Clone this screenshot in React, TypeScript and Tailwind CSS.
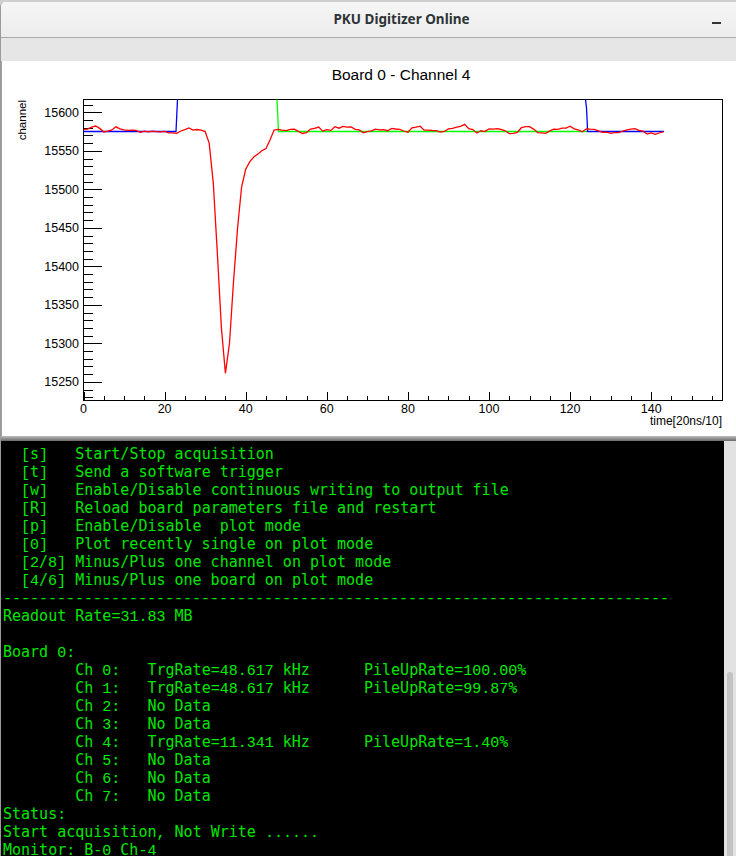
import React from 'react';

// plot coordinates (page pixels)
const X = (t: number) => 83.5 + t * 4.055;
const Y = (v: number) => 113.3 + (15600 - v) * 0.77;

const pulse: Record<number, number> = {
  30: 15575, 31: 15560, 32: 15508, 33: 15418, 34: 15320, 35: 15261, 36: 15300,
  37: 15380, 38: 15450, 39: 15503, 40: 15526, 41: 15536, 42: 15542, 43: 15546,
  44: 15550, 45: 15553, 46: 15564, 47: 15577,
};

function noise(i: number) {
  const s = Math.sin(i * 12.9898 + 4.1) * 43758.5453;
  return s - Math.floor(s);
}

const red = Array.from({ length: 144 }, (_, i) => {
  const n = (noise(i) + noise(i - 1) + noise(i + 1)) / 3 - 0.5;
  const v = pulse[i] ?? 15577 + n * 16 + Math.sin(i * 0.7) * 1.5;
  return `${X(i).toFixed(1)},${Y(v).toFixed(1)}`;
}).join(' ');

function Plot() {
  const yMajor = [15250, 15300, 15350, 15400, 15450, 15500, 15550, 15600];
  const yMinor: number[] = [];
  for (let v = 15230; v <= 15610; v += 10) yMinor.push(v);
  const xMajor = [0, 20, 40, 60, 80, 100, 120, 140];
  const xMinor: number[] = [];
  for (let t = 0; t <= 155; t += 5) xMinor.push(t);

  return (
    <svg width="734" height="375" viewBox="2 62 734 375" className="block">
      <text x="401" y="81" textAnchor="middle" fontSize="15.5" fontFamily="Liberation Sans, Arial, sans-serif" fill="#000">
        Board 0 - Channel 4
      </text>
      <text transform="translate(26,101) rotate(-90)" textAnchor="end" fontSize="11.5" fontFamily="Liberation Sans, Arial, sans-serif" fill="#000">
        channel
      </text>

      <g stroke="#000" strokeWidth="1" shapeRendering="crispEdges">
        <rect x="83.5" y="100.5" width="639" height="301" fill="none" />
        {yMinor.map((v) => (
          <line key={'ym' + v} x1="83.5" x2={yMajor.includes(v) ? 101.5 : 92.5} y1={Math.round(Y(v)) + 0.5} y2={Math.round(Y(v)) + 0.5} />
        ))}
        {xMinor.map((t) => (
          <line key={'xm' + t} x1={Math.round(X(t)) + 0.5} x2={Math.round(X(t)) + 0.5} y1="401.5" y2={t % 20 === 0 ? 392.5 : 396.5} />
        ))}
      </g>

      <g fontSize="12.5" fontFamily="Liberation Sans, Arial, sans-serif" fill="#000">
        {yMajor.map((v) => (
          <text key={'yl' + v} x="79" y={Y(v) + 4.5} textAnchor="end">{v}</text>
        ))}
        {xMajor.map((t) => (
          <text key={'xl' + t} x={X(t)} y="413.5" textAnchor="middle">{t}</text>
        ))}
        <text x="722" y="426" textAnchor="end" fontSize="12">time[20ns/10]</text>
      </g>

      <g fill="none" strokeWidth="1.3">
        <polyline points="277,100.5 278.5,132.5 587,132.5" stroke="#00ff00" />
        <polyline points="83.5,132.5 176,132.5 177.5,100.5" stroke="#0000ff" />
        <polyline points="585.5,100.5 586.5,109 587.3,125 587.5,132.5 664,132.5" stroke="#0000ff" />
        <polyline points={red} stroke="#ff0000" />
      </g>
    </svg>
  );
}

const lines = [
  '  [s]   Start/Stop acquisition',
  '  [t]   Send a software trigger',
  '  [w]   Enable/Disable continuous writing to output file',
  '  [R]   Reload board parameters file and restart',
  '  [p]   Enable/Disable  plot mode',
  '  [0]   Plot recently single on plot mode',
  '  [2/8] Minus/Plus one channel on plot mode',
  '  [4/6] Minus/Plus one board on plot mode',
  '-'.repeat(74),
  'Readout Rate=31.83 MB',
  '',
  'Board 0:',
  '        Ch 0:   TrgRate=48.617 kHz      PileUpRate=100.00%',
  '        Ch 1:   TrgRate=48.617 kHz      PileUpRate=99.87%',
  '        Ch 2:   No Data',
  '        Ch 3:   No Data',
  '        Ch 4:   TrgRate=11.341 kHz      PileUpRate=1.40%',
  '        Ch 5:   No Data',
  '        Ch 6:   No Data',
  '        Ch 7:   No Data',
  'Status:',
  'Start acquisition, Not Write ......',
  'Monitor: B-0 Ch-4',
];

// digits and punctuation come out thin in the original terminal
function TermLine({ text }: { text: string }) {
  const parts = text.split(/([0-9\[\]:.,=\-]+)/);
  return (
    <div className="h-[18px]">
      {parts.map((p, i) =>
        i % 2 === 1 ? (
          <span key={i} className="font-['Liberation_Mono',monospace] text-[#00ee00]">{p}</span>
        ) : (
          <span key={i}>{p}</span>
        )
      )}
    </div>
  );
}

export default function App() {
  return (
    <div className="w-[736px] h-[856px] overflow-hidden bg-[#d6d6d6] flex flex-col">
      <div className="h-[2px] bg-[#cfcfcf]" />
      <div className="flex-1 flex flex-col border-l border-[#9a9a9a] bg-[#e8e8e8] rounded-tl-[5px] overflow-hidden">
        <div className="h-[36px] shrink-0 relative flex items-center justify-center bg-gradient-to-b from-[#f6f6f6] to-[#ececec] border-b border-[#a9a9a9]">
          <span className="font-['Noto_Sans',sans-serif] font-bold text-[13.5px] text-[#2e3436] ml-[66px]">PKU Digitizer Online</span>
          <div className="absolute left-[711px] top-[20px] w-[9px] h-[2px] bg-[#2e3436]" />
        </div>
        <div className="h-[23px] shrink-0 bg-[#e6e6e6]" />
        <div className="h-[375px] shrink-0 bg-white border-l border-[#a0a0a0]">
          <Plot />
        </div>
        <div className="h-[5px] shrink-0 bg-gradient-to-b from-[#bdbdbd] to-[#6a6a6a]" />
        <div className="flex-1 flex min-h-0">
          <div className="flex-1 bg-black pt-[4px] pl-[2px] overflow-hidden whitespace-pre font-['DejaVu_Sans_Mono',monospace] text-[15px] leading-[18px] text-[#00e600]">
            {lines.map((l, i) => (
              <TermLine key={i} text={l} />
            ))}
          </div>
          <div className="w-[12px] shrink-0 bg-[#e2e2e2] pt-[231px] pl-[3px] pr-[3px]">
            <div className="h-full rounded-t-[3px] bg-[#c3c3c3]" />
          </div>
        </div>
      </div>
    </div>
  );
}
